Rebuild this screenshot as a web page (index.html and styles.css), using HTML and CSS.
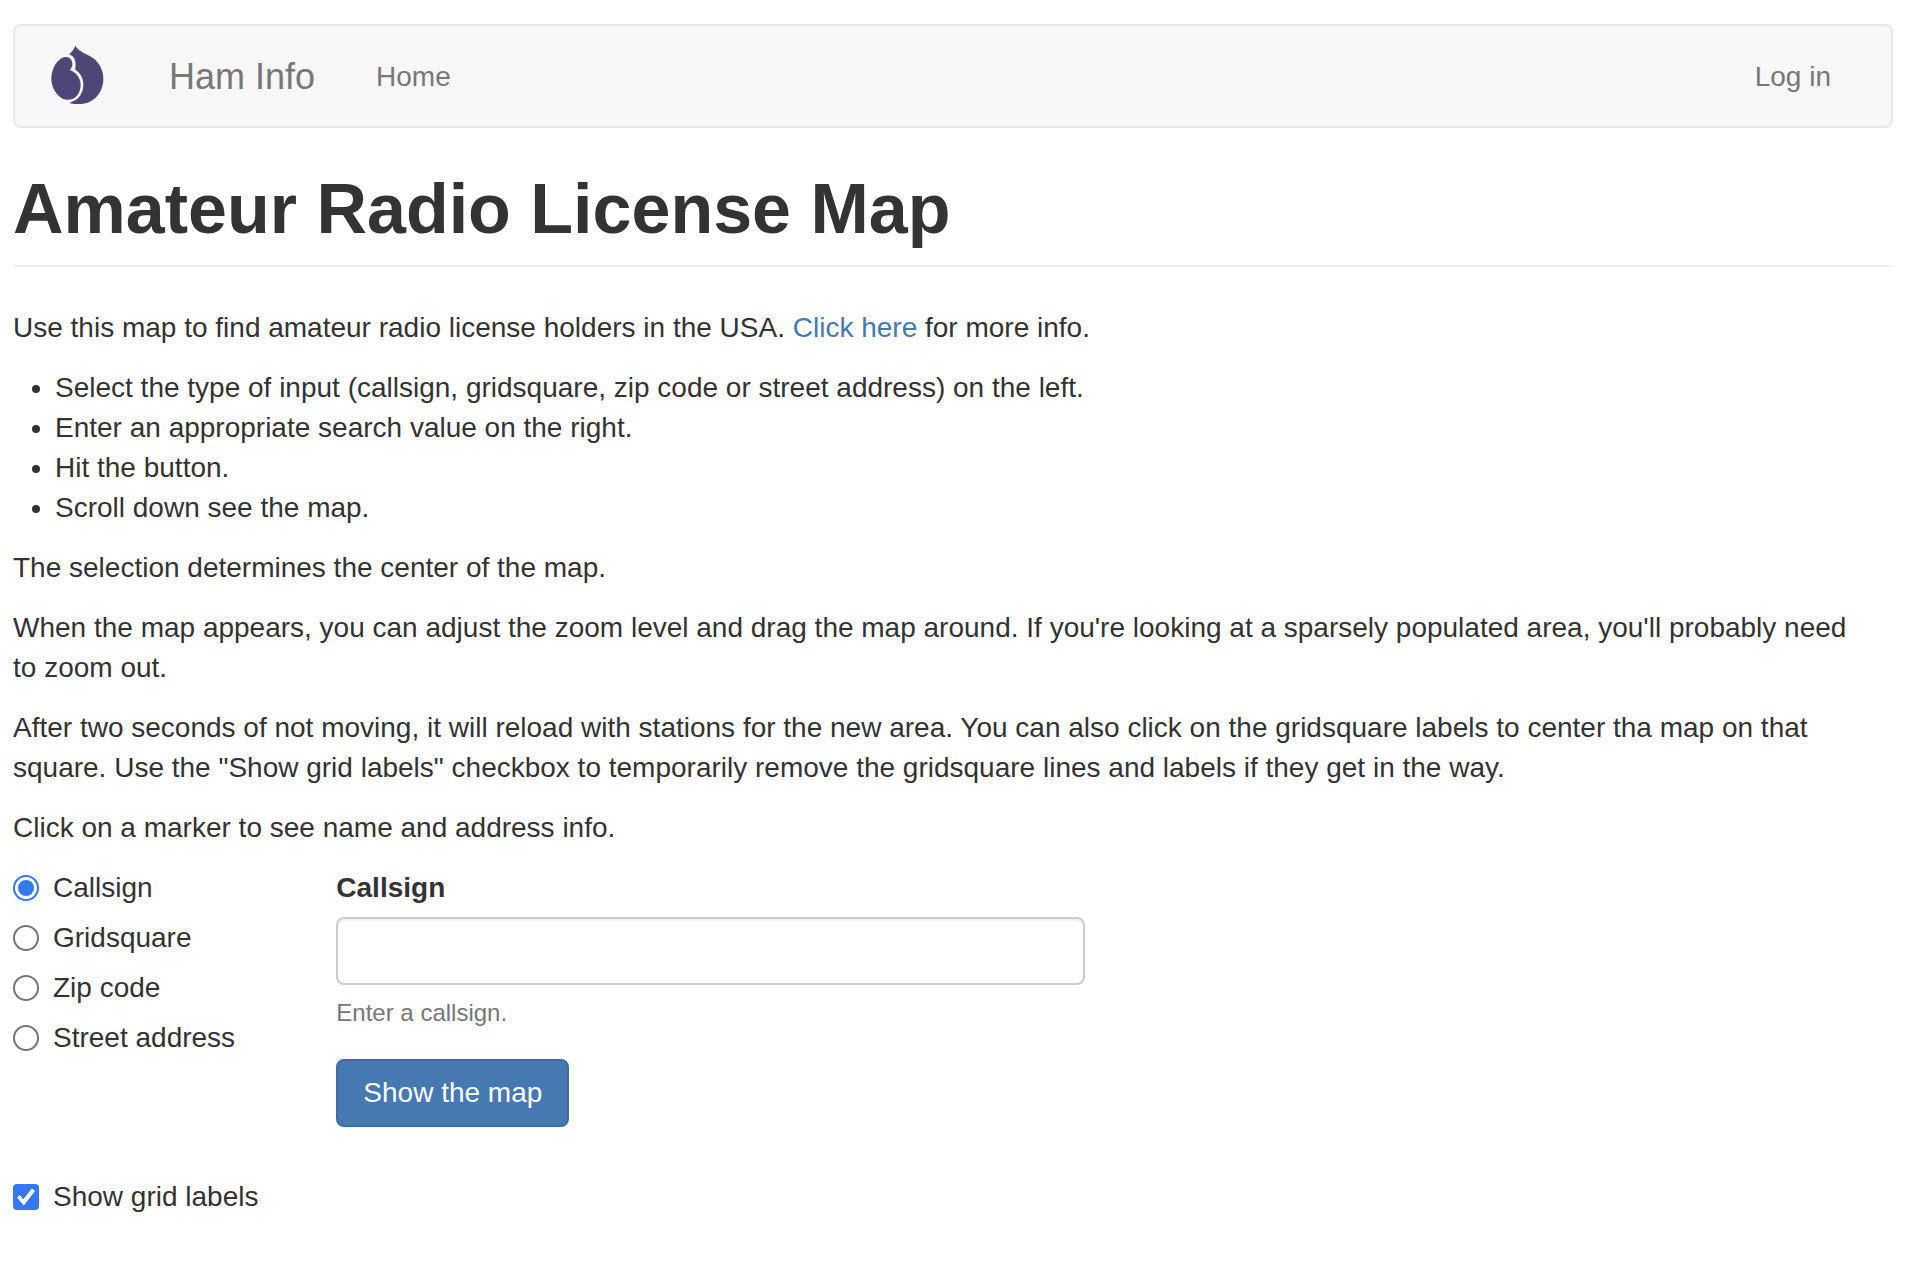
FILE: index.html
```html
<!DOCTYPE html>
<html lang="en">
<head>
<meta charset="utf-8">
<meta name="viewport" content="width=device-width, initial-scale=1">
<title>Amateur Radio License Map</title>
<link rel="stylesheet" href="styles.css">
</head>
<body>
<nav class="navbar">
  <a class="logo" href="#" aria-label="Start page">
    <svg width="54" height="60" viewBox="30 28 162 180" aria-hidden="true">
      <path fill="#4f4677" d="M106 30C110 36 114 41 120 45C132 54 148 58 160 68C178 82 190 104 190 129C190 172 160 205 118 205C107 205 96 205 88 202C94 198 101 197 107 193C121 183 130 166 130 147C130 126 120 112 105 101C108 92 108 78 103 69C100 63 94 58 87 56C92 52 101 43 106 30Z"/>
      <path fill="#4f4677" d="M76 64C88 63 96 71 97 83C98 90 95 97 90 103C107 110 122 126 122 147C122 167 112 184 97 190C87 194 73 193 64 187C46 174 34 152 34 129C34 100 52 67 76 64Z"/>
    </svg>
  </a>
  <a class="brand" href="#">Ham Info</a>
  <a class="nav-link" href="#">Home</a>
  <a class="nav-link nav-login" href="#">Log in</a>
</nav>

<main>
  <header class="page-header">
    <h1>Amateur Radio License Map</h1>
  </header>

  <p>Use this map to find amateur radio license holders in the USA. <a href="#">Click here</a> for more info.</p>
  <ul>
    <li>Select the type of input (callsign, gridsquare, zip code or street address) on the left.</li>
    <li>Enter an appropriate search value on the right.</li>
    <li>Hit the button.</li>
    <li>Scroll down see the map.</li>
  </ul>
  <p>The selection determines the center of the map.</p>
  <p>When the map appears, you can adjust the zoom level and drag the map around. If you're looking at a sparsely populated area, you'll probably need to zoom out.</p>
  <p>After two seconds of not moving, it will reload with stations for the new area. You can also click on the gridsquare labels to center tha map on that square. Use the "Show grid labels" checkbox to temporarily remove the gridsquare lines and labels if they get in the way.</p>
  <p>Click on a marker to see name and address info.</p>

  <form>
    <div class="row">
      <div class="col-type">
        <label class="option"><input type="radio" name="type" checked>Callsign</label>
        <label class="option"><input type="radio" name="type">Gridsquare</label>
        <label class="option"><input type="radio" name="type">Zip code</label>
        <label class="option"><input type="radio" name="type">Street address</label>
      </div>
      <div class="col-value">
        <label class="field-label" for="callsign">Callsign</label>
        <input class="field" id="callsign" type="text" aria-describedby="callsign-help">
        <p class="help" id="callsign-help">Enter a callsign.</p>
        <button class="button" type="button">Show the map</button>
      </div>
    </div>
    <label class="option"><input type="checkbox" checked>Show grid labels</label>
  </form>
</main>
</body>
</html>
```

FILE: styles.css
```css
*, *::before, *::after {
  box-sizing: border-box;
}

body {
  margin: 24px 23px 40px 13px;
  background: #fff;
  color: #333;
  font-family: "Helvetica Neue", "Liberation Sans", Arial, sans-serif;
  font-size: 28px;
  line-height: 40px;
}

a {
  color: #4679b2;
  text-decoration: none;
}

a:hover {
  text-decoration: underline;
}

p {
  margin: 0 0 20px;
  padding-right: 20px;
}

ul {
  margin: 0 0 20px;
  padding-left: 42px;
}

.navbar {
  display: flex;
  align-items: center;
  min-height: 104px;
  margin-bottom: 40px;
  padding: 0 60px 0 35px;
  background: #f8f8f8;
  border: 2px solid #e7e7e7;
  border-radius: 8px;
}

.navbar a {
  color: #777;
}

.logo {
  display: flex;
  margin-right: 65px;
  padding-bottom: 2px;
}

.brand,
.nav-link {
  padding-top: 2px;
}

.brand {
  margin-right: 61px;
  font-size: 36px;
}

.nav-login {
  margin-left: auto;
}

.page-header {
  margin-bottom: 41px;
  padding-bottom: 15px;
  border-bottom: 2px solid #eee;
}

h1 {
  margin: 0;
  font-size: 70px;
  font-weight: 700;
  line-height: 82px;
}

.row {
  display: grid;
  grid-template-columns: repeat(12, 1fr);
  column-gap: 60px;
  margin-bottom: 50px;
}

.col-type {
  grid-column: span 2;
  display: flex;
  flex-direction: column;
  gap: 10px;
}

.col-value {
  grid-column: span 5;
}

.option {
  display: flex;
  align-items: center;
  gap: 14px;
  white-space: nowrap;
}

.option input {
  appearance: none;
  display: grid;
  place-items: center;
  flex: none;
  width: 26px;
  height: 26px;
  margin: 0;
  background: #fff;
  border: 2px solid #767676;
}

.option input[type="radio"] {
  border-radius: 50%;
}

.option input[type="radio"]:checked {
  border-color: #3478f6;
}

.option input[type="radio"]:checked::before {
  content: "";
  width: 16px;
  height: 16px;
  border-radius: 50%;
  background: #3478f6;
}

.option input[type="checkbox"] {
  border-radius: 4px;
}

.option input[type="checkbox"]:checked {
  background: #3478f6;
  border-color: #3478f6;
}

.option input[type="checkbox"]:checked::before {
  content: "";
  width: 18px;
  height: 18px;
  background: #fff;
  clip-path: polygon(0 53%, 15% 39%, 35% 62%, 83% 3%, 100% 16%, 38% 97%);
}

.field-label {
  display: block;
  margin-bottom: 9px;
  font-weight: 700;
}

.field {
  display: block;
  width: 100%;
  height: 68px;
  padding: 12px 24px;
  color: #555;
  font: inherit;
  background: #fff;
  border: 2px solid #ccc;
  border-radius: 8px;
  box-shadow: inset 0 2px 2px rgba(0, 0, 0, 0.075);
}

.help {
  margin: 8px 0 26px;
  color: #777;
  font-size: 24px;
}

.button {
  display: block;
  height: 68px;
  padding: 0 25px;
  color: #fff;
  font: inherit;
  background: #4679b2;
  border: 2px solid #3f6da3;
  border-radius: 8px;
}
```
